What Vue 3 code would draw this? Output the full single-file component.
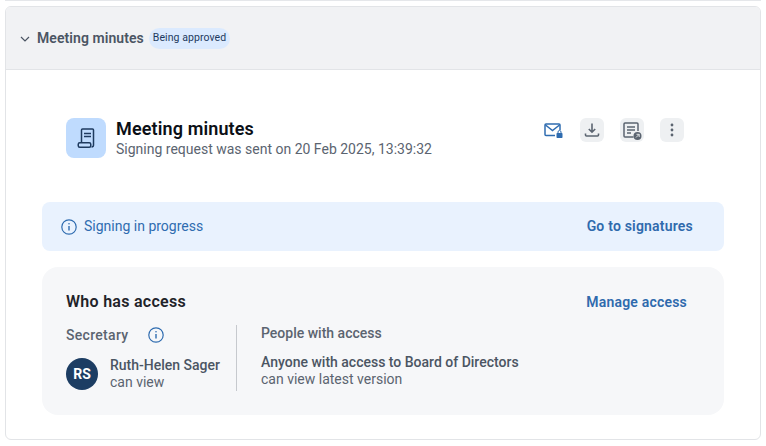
<script setup>
const iconButtons = ['download', 'report', 'more']
</script>

<template>
  <div class="page">
    <div class="prev-edge"></div>
    <section class="card">
      <header class="head">
        <svg class="chev" width="10" height="6" viewBox="0 0 10 6"><path d="M1 1l4 4 4-4" fill="none" stroke="#4b5563" stroke-width="1.2"/></svg>
        <span class="head-title">Meeting minutes</span>
        <span class="pill">Being approved</span>
      </header>
      <div class="body">
        <div class="doc-row">
          <div class="doc-icon">
            <svg width="22" height="24" viewBox="0 0 22 24" fill="none" stroke="#1e3a5f" stroke-width="1.5">
              <path d="M6.500 16V4a1 1 0 0 1 1-1h10a1 1 0 0 1 1 1v15a2 2 0 0 1-2 2"/>
              <rect x="3.250" y="16.750" width="12.500" height="4.500" rx="1.500"/>
              <path d="M9 7.500h7M9 10.500h7"/>
            </svg>
          </div>
          <div class="doc-text">
            <div class="doc-title">Meeting minutes</div>
            <div class="doc-sub">Signing request was sent on 20 Feb 2025, 13:39:32</div>
          </div>
          <div class="actions">
            <span class="mail">
              <svg width="20" height="16" viewBox="0 0 20 16" fill="none">
                <path d="M11 12.500H2a1 1 0 0 1-1-1V2a1 1 0 0 1 1-1h13a1 1 0 0 1 1 1V7" stroke="#2f6cb0" stroke-width="1.500"/>
                <path d="M1.500 2L8.500 7.500 15.500 2" stroke="#2f6cb0" stroke-width="1.500"/>
                <rect x="12.500" y="10" width="6" height="5" rx=".8" fill="#2f6cb0"/>
                <path d="M14 10V9a1.500 1.500 0 0 1 3 0v1" stroke="#2f6cb0" stroke-width="1"/>
              </svg>
            </span>
            <button v-for="b in iconButtons" :key="b" class="icon-btn">
              <svg v-if="b === 'download'" width="16" height="16" viewBox="0 0 16 16" fill="none" stroke="#5b6470" stroke-width="1.600">
                <path d="M8 1.500v8.500M4.800 7L8 10.200 11.200 7"/>
                <path d="M1.500 11.500v1.500a1 1 0 0 0 1 1h11a1 1 0 0 0 1-1v-1.500"/>
              </svg>
              <svg v-else-if="b === 'report'" width="20" height="20" viewBox="0 0 20 20" fill="none">
                <path d="M11.500 17H3a1 1 0 0 1-1-1V4a1 1 0 0 1 1-1h12a1 1 0 0 1 1 1v7" stroke="#5b6470" stroke-width="1.500"/>
                <path d="M5 7h8M5 10h8M5 13h4" stroke="#5b6470" stroke-width="1.400"/>
                <circle cx="15.500" cy="16" r="4" fill="#5b6470"/>
                <path d="M14 17.500l3-3M14.500 14.300h2.700V17" stroke="#eef0f2" stroke-width=".9"/>
              </svg>
              <svg v-else width="4" height="14" viewBox="0 0 4 14" fill="#5b6470">
                <circle cx="2" cy="2" r="1.400"/><circle cx="2" cy="7" r="1.400"/><circle cx="2" cy="12" r="1.400"/>
              </svg>
            </button>
          </div>
        </div>

        <div class="banner">
          <svg width="16" height="16" viewBox="0 0 16 16" fill="none" stroke="#2f6cb0" stroke-width="1.200">
            <circle cx="8" cy="8" r="7.200"/>
            <path d="M8 7v4.500" stroke-width="1.400"/>
            <circle cx="8" cy="4.800" r=".8" fill="#2f6cb0" stroke="none"/>
          </svg>
          <span class="banner-text">Signing in progress</span>
          <a class="banner-link">Go to signatures</a>
        </div>

        <div class="access">
          <div class="access-head">
            <h3>Who has access</h3>
            <a class="manage">Manage access</a>
          </div>
          <div class="access-cols">
            <div class="col-left">
              <div class="label-row">
                <span class="label">Secretary</span>
                <svg width="16" height="16" viewBox="0 0 16 16" fill="none" stroke="#2f6cb0" stroke-width="1.200">
                  <circle cx="8" cy="8" r="7.200"/>
                  <path d="M8 7v4.500" stroke-width="1.400"/>
                  <circle cx="8" cy="4.800" r=".8" fill="#2f6cb0" stroke="none"/>
                </svg>
              </div>
              <div class="person">
                <span class="avatar">RS</span>
                <div>
                  <div class="name">Ruth-Helen Sager</div>
                  <div class="perm">can view</div>
                </div>
              </div>
            </div>
            <div class="col-right">
              <div class="label">People with access</div>
              <div class="anyone">
                <div class="name">Anyone with access to Board of Directors</div>
                <div class="perm">can view latest version</div>
              </div>
            </div>
          </div>
        </div>
      </div>
    </section>
  </div>
</template>

<style>
html, body { margin: 0; background: #fff; }
</style>

<style scoped>
.page {
  width: 766px;
  height: 446px;
  box-sizing: border-box;
  padding: 6px 5px 0;
  font-family: Roboto, "Liberation Sans", sans-serif;
  position: relative;
  overflow: hidden;
}
.prev-edge {
  position: absolute;
  left: 5px;
  right: 5px;
  top: 0;
  height: 1px;
  background: #e5e7ea;
}
.card {
  width: 756px;
  height: 434px;
  box-sizing: border-box;
  border: 1px solid #e2e4e7;
  border-radius: 6px;
  overflow: hidden;
}
.head {
  height: 63px;
  box-sizing: border-box;
  background: #f1f2f4;
  border-bottom: 1px solid #e2e4e7;
  display: flex;
  align-items: center;
  padding-left: 14px;
}
.chev { margin-right: 7px; margin-top: 1px; }
.head-title {
  font-size: 14px;
  line-height: 18px;
  margin-top: -1px;
  font-weight: 600;
  letter-spacing: .07px;
  color: #4b5563;
}
.pill {
  margin-left: 5px;
  height: 21px;
  line-height: 19px;
  padding: 0 4px;
  margin-top: 1px;
  border-radius: 11px;
  background: #dbeafe;
  font-size: 10.500px;
  letter-spacing: .07px;
  color: #1e3a5f;
}
.body { padding: 48px 36px 0; }
.doc-row {
  display: flex;
  align-items: center;
  padding-left: 24px;
  height: 40px;
}
.doc-icon {
  width: 40px;
  height: 40px;
  border-radius: 8px;
  background: #bfdbfe;
  display: flex;
  align-items: center;
  justify-content: center;
}
.doc-text { margin-left: 10px; flex: 1; }
.doc-title {
  font-size: 18px;
  line-height: 22px;
  font-weight: 600;
  letter-spacing: .13px;
  color: #0b0f16;
}
.doc-sub {
  font-size: 14px;
  line-height: 18px;
  color: #5b6470;
}
.actions {
  display: flex;
  align-items: center;
  gap: 16px;
  padding-right: 40px;
  margin-top: -16px;
}
.mail { width: 20px; height: 16px; display: block; margin-top: 2px; }
.mail svg { display: block; }
.icon-btn {
  width: 24px;
  height: 24px;
  padding: 0;
  border: 0;
  border-radius: 6px;
  background: #eef0f2;
  display: flex;
  align-items: center;
  justify-content: center;
}
.banner {
  margin-top: 44px;
  height: 49px;
  border-radius: 8px;
  background: #e9f2fe;
  display: flex;
  align-items: center;
  padding: 0 31px 0 19px;
}
.banner-text {
  margin-left: 7px;
  flex: 1;
  font-size: 14px;
  line-height: 18px;
  margin-top: -1px;
  color: #2f6cb0;
}
.banner-link, .manage {
  font-size: 14px;
  font-weight: 600;
  letter-spacing: .2px;
  color: #2f6aad;
}
.banner-link { margin-top: -1px; }
.access {
  margin-top: 16px;
  height: 148px;
  box-sizing: border-box;
  border-radius: 16px;
  background: #f6f7f9;
  padding: 26px 37px 0 24px;
}
.access-head {
  display: flex;
  justify-content: space-between;
  align-items: center;
  height: 18px;
}
.access-head h3 {
  margin: 0;
  font-size: 16px;
  font-weight: 600;
  letter-spacing: .28px;
  margin-top: -1px;
  color: #1f2329;
}
.access-cols {
  display: flex;
  margin-top: 14px;
  height: 66px;
}
.col-left {
  width: 170px;
  border-right: 1px solid #c6c9ce;
}
.label-row {
  display: flex;
  align-items: center;
  gap: 20px;
  height: 20px;
}
.label {
  font-size: 14px;
  font-weight: 500;
  line-height: 18px;
  letter-spacing: .3px;
  color: #5b6470;
}
.person {
  display: flex;
  align-items: center;
  margin-top: 12px;
  gap: 12px;
}
.avatar {
  width: 32px;
  height: 32px;
  border-radius: 50%;
  background: #1c3d63;
  color: #fff;
  font-size: 14px;
  font-weight: 700;
  display: flex;
  align-items: center;
  justify-content: center;
}
.name {
  font-size: 14px;
  line-height: 17px;
  font-weight: 500;
  color: #4b5563;
}
.perm {
  font-size: 14px;
  line-height: 17px;
  color: #5b6470;
}
.col-right { padding-left: 24px; margin-top: -1px; }
.col-right .label { letter-spacing: 0; }
.anyone { margin-top: 12px; }
</style>
